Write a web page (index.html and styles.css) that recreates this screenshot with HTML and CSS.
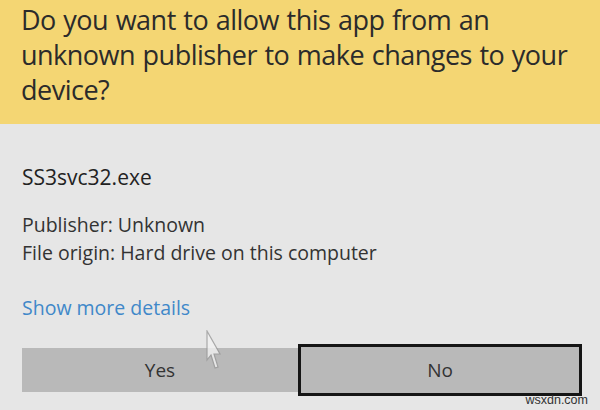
FILE: index.html
```html
<!DOCTYPE html>
<html>
<head>
<meta charset="utf-8">
<link rel="stylesheet" href="styles.css">
</head>
<body>
<div class="dialog">
  <div class="banner">Do you want to allow this app from an unknown publisher to make changes to your device?</div>
  <div class="body">
    <div class="app-name">SS3svc32.exe</div>
    <div class="info">
      <div>Publisher: Unknown</div>
      <div>File origin: Hard drive on this computer</div>
    </div>
    <a class="details" href="#">Show more details</a>
    <div class="buttons">
      <div class="btn yes">Yes</div>
      <div class="btn no">No</div>
    </div>
  </div>
  <svg class="cursor" width="16" height="42" viewBox="0 0 16 42">
    <path d="M1 1 L1 30 L5 25 L9 38 L12 37 L8 24 L14 24 Z" fill="#f2f2f2" stroke="#9a9a9a" stroke-width="1.2" opacity="0.8"/>
  </svg>
  <div class="watermark">wsxdn.com</div>
</div>
</body>
</html>
```
FILE: styles.css
```css
html, body {
  margin: 0;
  padding: 0;
}
body {
  width: 600px;
  height: 410px;
  overflow: hidden;
  background: #e6e6e6;
  font-family: "Open Sans", "Noto Sans", sans-serif;
}
.dialog {
  position: relative;
  width: 600px;
  height: 410px;
}
.banner {
  background: #f4d673;
  color: #2b2b2b;
  font-size: 27px;
  line-height: 35px;
  padding: 2px 20px 0 21px;
  height: 124px;
  box-sizing: border-box;
  letter-spacing: -0.5px;
  word-spacing: 1px;
}
.body {
  padding: 39px 18px 0 22px;
}
.app-name {
  font-size: 21px;
  color: #222;
  line-height: 28px;
}
.info {
  margin-top: 20px;
  font-size: 19.5px;
  line-height: 28px;
  color: #333;
}
.details {
  display: block;
  margin-top: 27px;
  font-size: 19.5px;
  line-height: 28px;
  color: #4088c9;
  text-decoration: none;
}
.buttons {
  display: flex;
  align-items: center;
  margin-top: 22px;
}
.btn {
  background: #b9b9b9;
  color: #333;
  font-size: 19px;
  display: flex;
  align-items: center;
  justify-content: center;
  box-sizing: border-box;
}
.yes {
  width: 276px;
  height: 44px;
}
.no {
  width: 284px;
  height: 52px;
  border: 3px solid #151515;
}
.cursor {
  position: absolute;
  left: 206px;
  top: 330px;
}
.watermark {
  position: absolute;
  right: 12px;
  top: 393px;
  font-family: "Liberation Sans", Arial, sans-serif;
  font-size: 12.5px;
  line-height: 15px;
  color: #333;
}
```
